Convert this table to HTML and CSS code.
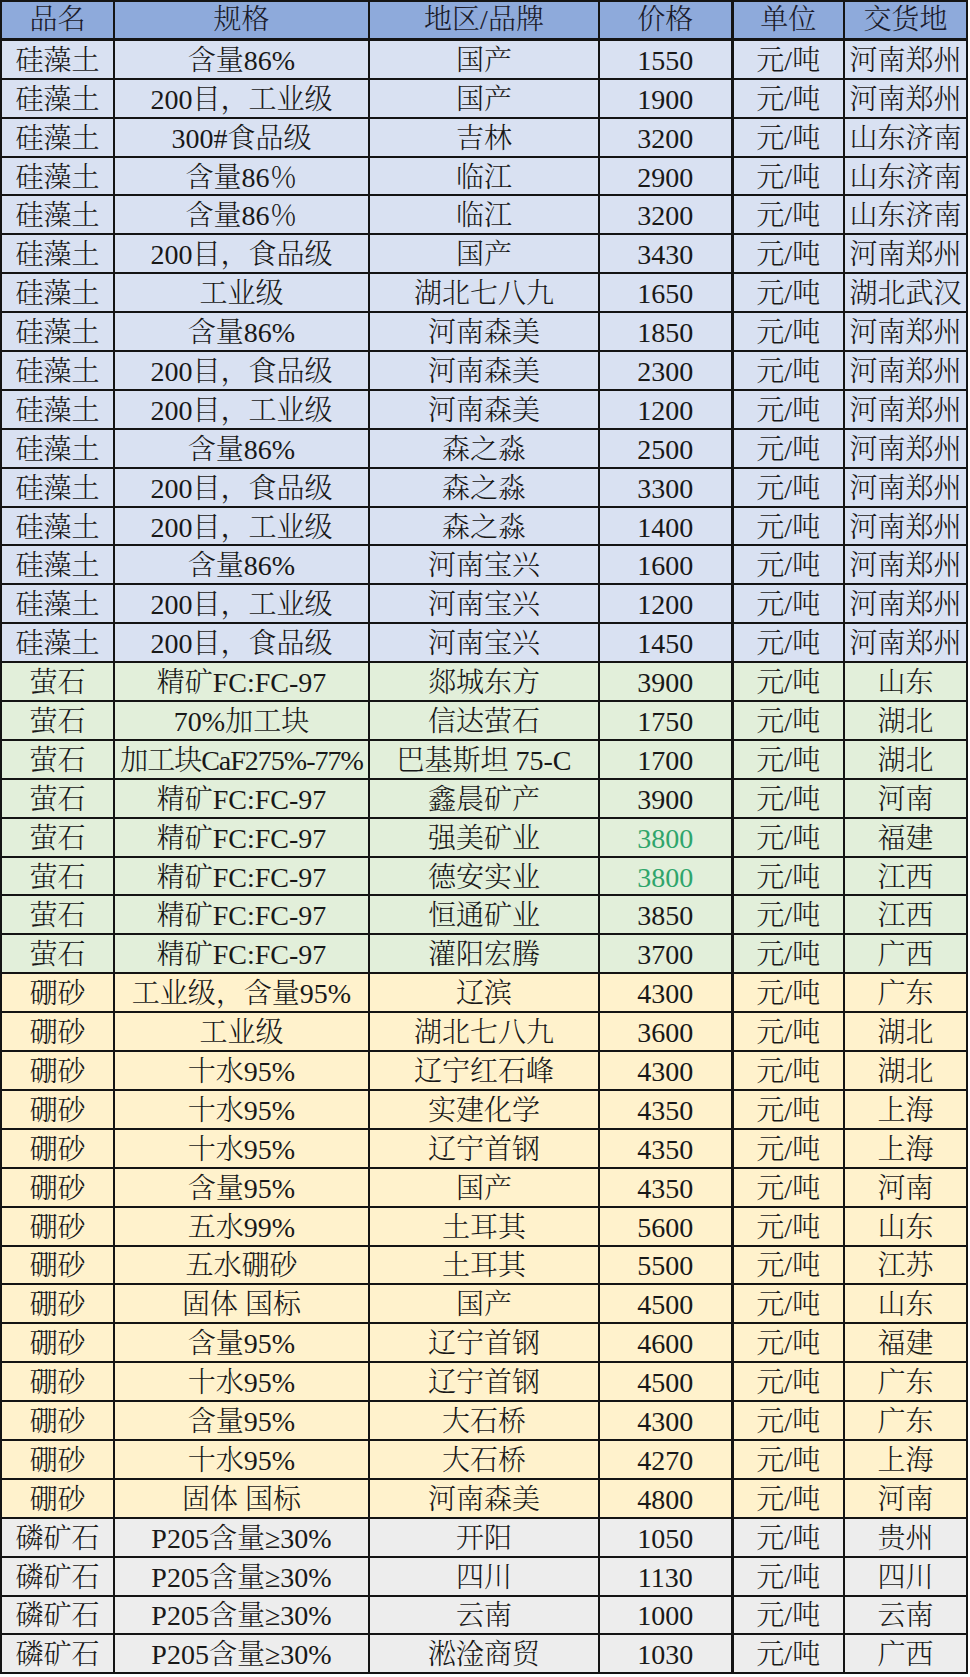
FILE: index.html
```html
<!DOCTYPE html>
<html lang="zh-CN">
<head>
<meta charset="utf-8">
<title>化工矿产价格表</title>
<link rel="stylesheet" href="styles.css">
</head>
<body>
<table class="price-table">
  <colgroup>
    <col class="c-name"><col class="c-spec"><col class="c-brand"><col class="c-price"><col class="c-unit"><col class="c-place">
  </colgroup>
  <thead>
    <tr><th>品名</th><th>规格</th><th>地区/品牌</th><th>价格</th><th class="sep">单位</th><th>交货地</th></tr>
  </thead>
  <tbody>
    <tr class="g-blue"><td>硅藻土</td><td>含量86%</td><td>国产</td><td>1550</td><td class="sep">元/吨</td><td>河南郑州</td></tr>
    <tr class="g-blue"><td>硅藻土</td><td>200目，工业级</td><td>国产</td><td>1900</td><td class="sep">元/吨</td><td>河南郑州</td></tr>
    <tr class="g-blue"><td>硅藻土</td><td>300#食品级</td><td>吉林</td><td>3200</td><td class="sep">元/吨</td><td>山东济南</td></tr>
    <tr class="g-blue"><td>硅藻土</td><td>含量86％</td><td>临江</td><td>2900</td><td class="sep">元/吨</td><td>山东济南</td></tr>
    <tr class="g-blue"><td>硅藻土</td><td>含量86％</td><td>临江</td><td>3200</td><td class="sep">元/吨</td><td>山东济南</td></tr>
    <tr class="g-blue"><td>硅藻土</td><td>200目，食品级</td><td>国产</td><td>3430</td><td class="sep">元/吨</td><td>河南郑州</td></tr>
    <tr class="g-blue"><td>硅藻土</td><td>工业级</td><td>湖北七八九</td><td>1650</td><td class="sep">元/吨</td><td>湖北武汉</td></tr>
    <tr class="g-blue"><td>硅藻土</td><td>含量86%</td><td>河南森美</td><td>1850</td><td class="sep">元/吨</td><td>河南郑州</td></tr>
    <tr class="g-blue"><td>硅藻土</td><td>200目，食品级</td><td>河南森美</td><td>2300</td><td class="sep">元/吨</td><td>河南郑州</td></tr>
    <tr class="g-blue"><td>硅藻土</td><td>200目，工业级</td><td>河南森美</td><td>1200</td><td class="sep">元/吨</td><td>河南郑州</td></tr>
    <tr class="g-blue"><td>硅藻土</td><td>含量86%</td><td>森之淼</td><td>2500</td><td class="sep">元/吨</td><td>河南郑州</td></tr>
    <tr class="g-blue"><td>硅藻土</td><td>200目，食品级</td><td>森之淼</td><td>3300</td><td class="sep">元/吨</td><td>河南郑州</td></tr>
    <tr class="g-blue"><td>硅藻土</td><td>200目，工业级</td><td>森之淼</td><td>1400</td><td class="sep">元/吨</td><td>河南郑州</td></tr>
    <tr class="g-blue"><td>硅藻土</td><td>含量86%</td><td>河南宝兴</td><td>1600</td><td class="sep">元/吨</td><td>河南郑州</td></tr>
    <tr class="g-blue"><td>硅藻土</td><td>200目，工业级</td><td>河南宝兴</td><td>1200</td><td class="sep">元/吨</td><td>河南郑州</td></tr>
    <tr class="g-blue"><td>硅藻土</td><td>200目，食品级</td><td>河南宝兴</td><td>1450</td><td class="sep">元/吨</td><td>河南郑州</td></tr>

    <tr class="g-green"><td>萤石</td><td>精矿FC:FC-97</td><td>郯城东方</td><td>3900</td><td class="sep">元/吨</td><td>山东</td></tr>
    <tr class="g-green"><td>萤石</td><td>70%加工块</td><td>信达萤石</td><td>1750</td><td class="sep">元/吨</td><td>湖北</td></tr>
    <tr class="g-green"><td>萤石</td><td class="tight">加工块CaF275%-77%</td><td>巴基斯坦 75-C</td><td>1700</td><td class="sep">元/吨</td><td>湖北</td></tr>
    <tr class="g-green"><td>萤石</td><td>精矿FC:FC-97</td><td>鑫晨矿产</td><td>3900</td><td class="sep">元/吨</td><td>河南</td></tr>
    <tr class="g-green"><td>萤石</td><td>精矿FC:FC-97</td><td>强美矿业</td><td class="hl">3800</td><td class="sep">元/吨</td><td>福建</td></tr>
    <tr class="g-green"><td>萤石</td><td>精矿FC:FC-97</td><td>德安实业</td><td class="hl">3800</td><td class="sep">元/吨</td><td>江西</td></tr>
    <tr class="g-green"><td>萤石</td><td>精矿FC:FC-97</td><td>恒通矿业</td><td>3850</td><td class="sep">元/吨</td><td>江西</td></tr>
    <tr class="g-green"><td>萤石</td><td>精矿FC:FC-97</td><td>灌阳宏腾</td><td>3700</td><td class="sep">元/吨</td><td>广西</td></tr>

    <tr class="g-yellow"><td>硼砂</td><td>工业级，含量95%</td><td>辽滨</td><td>4300</td><td class="sep">元/吨</td><td>广东</td></tr>
    <tr class="g-yellow"><td>硼砂</td><td>工业级</td><td>湖北七八九</td><td>3600</td><td class="sep">元/吨</td><td>湖北</td></tr>
    <tr class="g-yellow"><td>硼砂</td><td>十水95%</td><td>辽宁红石峰</td><td>4300</td><td class="sep">元/吨</td><td>湖北</td></tr>
    <tr class="g-yellow"><td>硼砂</td><td>十水95%</td><td>实建化学</td><td>4350</td><td class="sep">元/吨</td><td>上海</td></tr>
    <tr class="g-yellow"><td>硼砂</td><td>十水95%</td><td>辽宁首钢</td><td>4350</td><td class="sep">元/吨</td><td>上海</td></tr>
    <tr class="g-yellow"><td>硼砂</td><td>含量95%</td><td>国产</td><td>4350</td><td class="sep">元/吨</td><td>河南</td></tr>
    <tr class="g-yellow"><td>硼砂</td><td>五水99%</td><td>土耳其</td><td>5600</td><td class="sep">元/吨</td><td>山东</td></tr>
    <tr class="g-yellow"><td>硼砂</td><td>五水硼砂</td><td>土耳其</td><td>5500</td><td class="sep">元/吨</td><td>江苏</td></tr>
    <tr class="g-yellow"><td>硼砂</td><td>固体 国标</td><td>国产</td><td>4500</td><td class="sep">元/吨</td><td>山东</td></tr>
    <tr class="g-yellow"><td>硼砂</td><td>含量95%</td><td>辽宁首钢</td><td>4600</td><td class="sep">元/吨</td><td>福建</td></tr>
    <tr class="g-yellow"><td>硼砂</td><td>十水95%</td><td>辽宁首钢</td><td>4500</td><td class="sep">元/吨</td><td>广东</td></tr>
    <tr class="g-yellow"><td>硼砂</td><td>含量95%</td><td>大石桥</td><td>4300</td><td class="sep">元/吨</td><td>广东</td></tr>
    <tr class="g-yellow"><td>硼砂</td><td>十水95%</td><td>大石桥</td><td>4270</td><td class="sep">元/吨</td><td>上海</td></tr>
    <tr class="g-yellow"><td>硼砂</td><td>固体 国标</td><td>河南森美</td><td>4800</td><td class="sep">元/吨</td><td>河南</td></tr>

    <tr class="g-gray"><td>磷矿石</td><td>P205含量≥30%</td><td>开阳</td><td>1050</td><td class="sep">元/吨</td><td>贵州</td></tr>
    <tr class="g-gray"><td>磷矿石</td><td>P205含量≥30%</td><td>四川</td><td>1130</td><td class="sep">元/吨</td><td>四川</td></tr>
    <tr class="g-gray"><td>磷矿石</td><td>P205含量≥30%</td><td>云南</td><td>1000</td><td class="sep">元/吨</td><td>云南</td></tr>
    <tr class="g-gray"><td>磷矿石</td><td>P205含量≥30%</td><td>淞淦商贸</td><td>1030</td><td class="sep">元/吨</td><td>广西</td></tr>
  </tbody>
</table>
</body>
</html>
```

FILE: styles.css
```css
html, body {
  margin: 0;
  padding: 0;
  background: #ffffff;
}

.price-table {
  border-collapse: collapse;
  table-layout: fixed;
  width: 966px;
  font-family: "Liberation Serif", "Noto Serif CJK SC", "Noto Sans CJK SC", serif;
  font-size: 28px;
  font-weight: 300;
  color: #181818;
}

.c-name { width: 113px; }
.c-spec { width: 255px; }
.c-brand { width: 230px; }
.c-price { width: 133px; }
.c-unit { width: 112px; }
.c-place { width: 123px; }

.price-table tr {
  height: 38.9px;
}

.price-table th,
.price-table td {
  border: 2px solid #141414;
  padding: 3px 0 0;
  text-align: center;
  vertical-align: middle;
  white-space: nowrap;
  overflow: hidden;
  line-height: 1;
  font-weight: 300;
}

.price-table th {
  background: #8eaadb;
  border-bottom-width: 3px;
  padding-top: 0;
  color: #1a1a2a;
}

.price-table .sep {
  border-left-width: 3px;
}

.price-table td.tight {
  letter-spacing: -1px;
}

.g-blue td { background: #d9e1f2; }
.g-green td { background: #e2efda; }
.g-yellow td { background: #fff2cc; }
.g-gray td { background: #ededed; }

.price-table td.hl {
  color: #2fa56b;
}
```
